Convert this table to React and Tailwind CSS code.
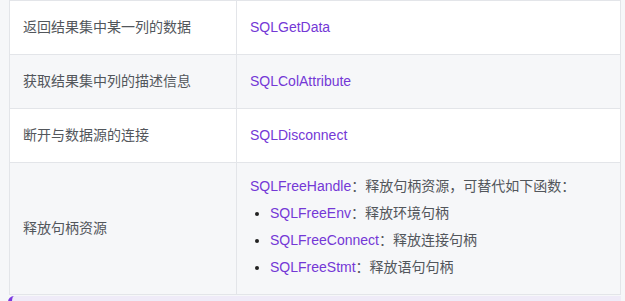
const rows = [
    { desc: '返回结果集中某一列的数据', fn: 'SQLGetData' },
    { desc: '获取结果集中列的描述信息', fn: 'SQLColAttribute' },
    { desc: '断开与数据源的连接', fn: 'SQLDisconnect' },
];

const freeItems = [
    { fn: 'SQLFreeEnv', text: '释放环境句柄' },
    { fn: 'SQLFreeConnect', text: '释放连接句柄' },
    { fn: 'SQLFreeStmt', text: '释放语句句柄' },
];

const cell = 'border border-[#e3e5e9] px-[13px] align-middle';

const App = () => {
    return (
        <div
            className="w-[625px] h-[301px] overflow-hidden bg-[#f6f7f9] pl-[9px] text-[14px] text-[#52565b]"
            style={{ fontFamily: '"Liberation Sans", "Noto Sans CJK SC", sans-serif' }}
        >
            <table className="w-[612px] border-collapse table-fixed">
                <colgroup>
                    <col className="w-[227px]" />
                    <col />
                </colgroup>
                <tbody>
                    {rows.map((r, i) => (
                        <tr key={r.fn} className={i % 2 === 1 ? 'bg-[#f6f7f9]' : 'bg-white'}>
                            <td className={`${cell} h-[54px] leading-[27px]`}>{r.desc}</td>
                            <td className={`${cell} leading-[27px] text-[#7438d6]`}>{r.fn}</td>
                        </tr>
                    ))}
                    <tr className="bg-[#f6f7f9]">
                        <td className={`${cell} leading-[27px]`}>释放句柄资源</td>
                        <td className={`${cell} pt-[11px] pb-[13px]`}>
                            <p className="leading-6 mb-[2px]">
                                <span className="text-[#7438d6]">SQLFreeHandle</span>：释放句柄资源，可替代如下函数：
                            </p>
                            <ul className="list-disc pl-5 marker:text-[#222]">
                                {freeItems.map(it => (
                                    <li key={it.fn} className="leading-[27px]">
                                        <span className="text-[#7438d6]">{it.fn}</span>：{it.text}
                                    </li>
                                ))}
                            </ul>
                        </td>
                    </tr>
                </tbody>
            </table>
            <div className="mt-[1px] -ml-[1px] w-[613px] h-[20px] bg-[#efebf8] border-l-4 border-[#7b3ae0] rounded-tl-[6px]" />
        </div>
    );
};

export default App;
